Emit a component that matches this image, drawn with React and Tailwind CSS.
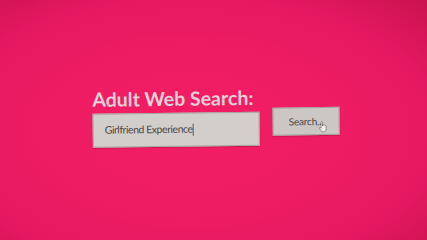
function HandCursor() {
  return (
    <svg width="9" height="12" viewBox="0 0 18 24" className="absolute left-[45px] top-[13px]">
      <path
        d="M5 2.5c0-1 .7-1.6 1.5-1.6S8 1.5 8 2.5V10l.4-2.2c.9-.6 2-.3 2.3.6.9-.5 1.9-.2 2.2.7 1-.4 2 .2 2 1.2V16c0 3-1.8 5.5-4.6 5.5H8.4c-1.7 0-2.8-.8-3.7-2.2L1.3 14c-.6-1 .3-2.1 1.4-1.6L5 14.2z"
        fill="#f2f0ee"
        stroke="#555"
        strokeWidth="1.1"
        strokeLinejoin="round"
      />
    </svg>
  );
}

export default function App() {
  return (
    <div className="w-[427px] h-[240px] overflow-hidden bg-[radial-gradient(ellipse_at_45%_55%,#f21e65_0%,#ee1c63_45%,#e41860_75%,#c9124f_100%)] font-['Lato','Noto_Sans',sans-serif]">
      <div className="pt-[89px] pl-[92px] rotate-[-0.7deg] origin-left">
        <h1 className="text-[19.5px] leading-[24px] font-bold text-[#e9cfd7]">Adult Web Search:</h1>
        <div className="flex items-start mt-[2px]">
          <div className="w-[167px] h-[34px] bg-[#d2cecb] border border-[#a9a3a2] flex items-center pl-[11px] shadow-[0_1px_1px_rgba(120,0,40,0.3)]">
            <span className="text-[10.5px] tracking-[-0.45px] text-[#4b4747]">Girlfriend Experience</span>
            <span className="w-px h-[12px] bg-[#555]" />
          </div>
          <button className="relative ml-[13px] -mt-[4px] w-[67px] h-[28px] bg-[#cbc7c4] border border-[#a59f9e] text-[10px] tracking-[-0.2px] text-[#4a4646] shadow-[0_1px_1px_rgba(120,0,40,0.3)]">
            Search...
            <HandCursor />
          </button>
        </div>
      </div>
    </div>
  );
}
